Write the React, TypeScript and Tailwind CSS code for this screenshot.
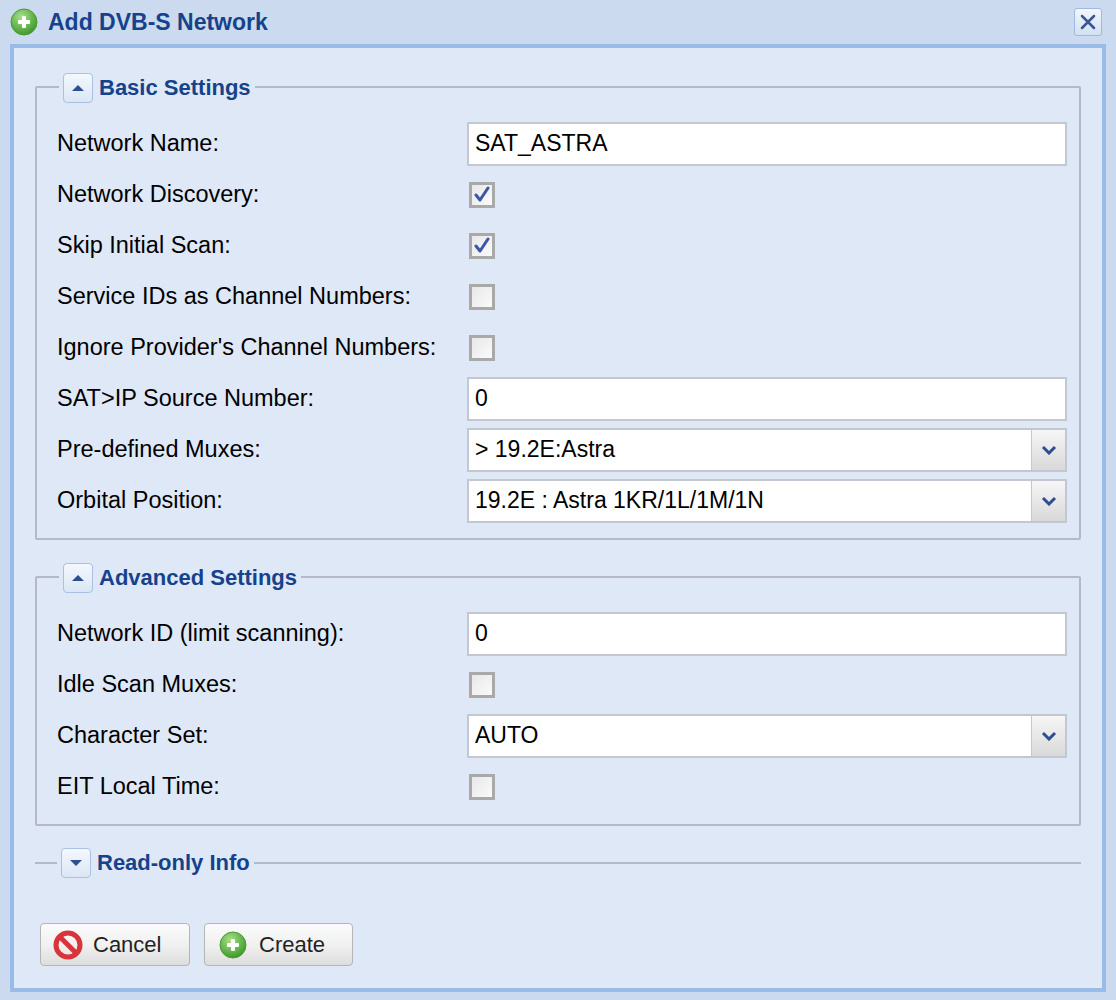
import React from "react";

const F = { fontFamily: '"Liberation Sans", Arial, sans-serif' };

function Plus({ size = 28 }: { size?: number }) {
  return (
    <svg width={size} height={size} viewBox="0 0 28 28">
      <defs>
        <radialGradient id="pg" cx="40%" cy="30%" r="70%">
          <stop offset="0" stopColor="#a8e08a" />
          <stop offset="1" stopColor="#3f9a2a" />
        </radialGradient>
      </defs>
      <circle cx="14" cy="14" r="13" fill="url(#pg)" stroke="#4c9a3a" />
      <rect x="8" y="12" width="12" height="4" fill="#fff" rx="1" />
      <rect x="12" y="8" width="4" height="12" fill="#fff" rx="1" />
    </svg>
  );
}

function Toggle({ up }: { up: boolean }) {
  return (
    <div className="w-[30px] h-[30px] rounded-[4px] border border-[#a9c1e3] bg-gradient-to-b from-[#f4f8fd] to-[#dbe6f5] flex items-center justify-center">
      <svg width="14" height="10" viewBox="0 0 14 10">
        {up ? <path d="M1 8 L7 2 L13 8 Z" fill="#2b4f8f" /> : <path d="M1 2 L7 8 L13 2 Z" fill="#2b4f8f" />}
      </svg>
    </div>
  );
}

function Check({ on }: { on: boolean }) {
  return (
    <div className="w-[26px] h-[26px] border-[3px] border-[#a9a9a9] bg-gradient-to-br from-[#e8e8e8] to-[#fafafa] flex items-center justify-center">
      {on && (
        <svg width="18" height="18" viewBox="0 0 18 18">
          <path d="M3 9 L7 14 L15 2" fill="none" stroke="#3b55a8" strokeWidth="3" strokeLinecap="round" strokeLinejoin="round" />
        </svg>
      )}
    </div>
  );
}

function Text({ v }: { v: string }) {
  return (
    <div className="w-[600px] h-[44px] border-2 border-[#c3c8d0] bg-white flex items-center px-[6px] text-[23px] text-black">
      {v}
    </div>
  );
}

function Select({ v }: { v: string }) {
  return (
    <div className="w-[600px] h-[44px] border-2 border-[#c3c8d0] bg-white flex items-center text-[23px] text-black">
      <div className="flex-1 px-[6px]">{v}</div>
      <div className="w-[34px] h-full border-l border-[#c3c8d0] bg-gradient-to-b from-[#f6f6f6] to-[#d9d9d9] flex items-center justify-center">
        <svg width="16" height="10" viewBox="0 0 16 10">
          <path d="M2 2 L8 8 L14 2" fill="none" stroke="#2b4f8f" strokeWidth="3" />
        </svg>
      </div>
    </div>
  );
}

type Row = { l: string; t?: string; c?: boolean; s?: string };

function Rows({ rows }: { rows: Row[] }) {
  return (
    <div className="flex flex-col">
      {rows.map((r, i) => (
        <div key={i} className="flex items-center h-[51px]">
          <div className="w-[410px] text-[23.5px] text-black">{r.l}</div>
          {r.t !== undefined && <Text v={r.t} />}
          {r.s !== undefined && <Select v={r.s} />}
          {r.c !== undefined && (
            <div className="ml-[2px]">
              <Check on={r.c} />
            </div>
          )}
        </div>
      ))}
    </div>
  );
}

function Fieldset({ title, children, up }: { title: string; children?: React.ReactNode; up: boolean }) {
  return (
    <div className="relative border-2 border-[#b5b8c8] rounded-[2px] pt-[30px] pb-[12px] pl-[20px] pr-[10px]">
      <div className="absolute -top-[17px] left-[22px] flex items-center gap-[6px] bg-[#dfe8f6] px-[4px]">
        <Toggle up={up} />
        <span className="text-[22px] font-bold text-[#15428b]">{title}</span>
      </div>
      {children}
    </div>
  );
}

export default function App() {
  return (
    <div style={F} className="w-[1116px] h-[1000px] bg-[#cbdaee] flex flex-col">
      <div className="h-[44px] flex items-center pl-[10px] pr-[14px]">
        <Plus />
        <span className="ml-[10px] text-[23px] font-bold text-[#15428b]">Add DVB-S Network</span>
        <div className="ml-auto w-[28px] h-[28px] rounded-[3px] border border-[#9fb9e0] bg-gradient-to-b from-[#f2f6fc] to-[#d2e0f3] flex items-center justify-center">
          <svg width="18" height="18" viewBox="0 0 18 18">
            <path d="M3 3 L15 15 M15 3 L3 15" stroke="#3a5690" strokeWidth="2.5" strokeLinecap="round" />
          </svg>
        </div>
      </div>
      <div className="mx-[10px] mb-[8px] flex-1 border-[4px] border-[#99bbe8] bg-[#dfe8f6] px-[21px] pt-[38px]">
        <Fieldset title="Basic Settings" up>
          <Rows
            rows={[
              { l: "Network Name:", t: "SAT_ASTRA" },
              { l: "Network Discovery:", c: true },
              { l: "Skip Initial Scan:", c: true },
              { l: "Service IDs as Channel Numbers:", c: false },
              { l: "Ignore Provider's Channel Numbers:", c: false },
              { l: "SAT>IP Source Number:", t: "0" },
              { l: "Pre-defined Muxes:", s: "> 19.2E:Astra" },
              { l: "Orbital Position:", s: "19.2E : Astra 1KR/1L/1M/1N" },
            ]}
          />
        </Fieldset>
        <div className="h-[36px]" />
        <Fieldset title="Advanced Settings" up>
          <Rows
            rows={[
              { l: "Network ID (limit scanning):", t: "0" },
              { l: "Idle Scan Muxes:", c: false },
              { l: "Character Set:", s: "AUTO" },
              { l: "EIT Local Time:", c: false },
            ]}
          />
        </Fieldset>
        <div className="mt-[20px] flex items-center">
          <div className="w-[22px] h-[2px] bg-[#b5b8c8]" />
          <div className="flex items-center gap-[6px] px-[4px]">
            <Toggle up={false} />
            <span className="text-[22px] font-bold text-[#15428b]">Read-only Info</span>
          </div>
          <div className="flex-1 h-[2px] bg-[#b5b8c8]" />
        </div>
        <div className="mt-[44px] flex gap-[14px] pl-[5px]">
          <div className="w-[150px] h-[43px] rounded-[4px] border border-[#b5b5b5] bg-gradient-to-b from-[#fbfbfb] via-[#f1f1f1] to-[#dddddd] flex items-center px-[12px] gap-[10px] text-[22px] text-[#222]">
            <svg width="30" height="30" viewBox="0 0 30 30">
              <circle cx="15" cy="15" r="12" fill="none" stroke="#d8343a" strokeWidth="5" />
              <path d="M7 7 L23 23" stroke="#d8343a" strokeWidth="5" />
            </svg>
            Cancel
          </div>
          <div className="w-[149px] h-[43px] rounded-[4px] border border-[#b5b5b5] bg-gradient-to-b from-[#fbfbfb] via-[#f1f1f1] to-[#dddddd] flex items-center px-[14px] gap-[12px] text-[22px] text-[#222]">
            <Plus size={28} />
            Create
          </div>
        </div>
      </div>
    </div>
  );
}
